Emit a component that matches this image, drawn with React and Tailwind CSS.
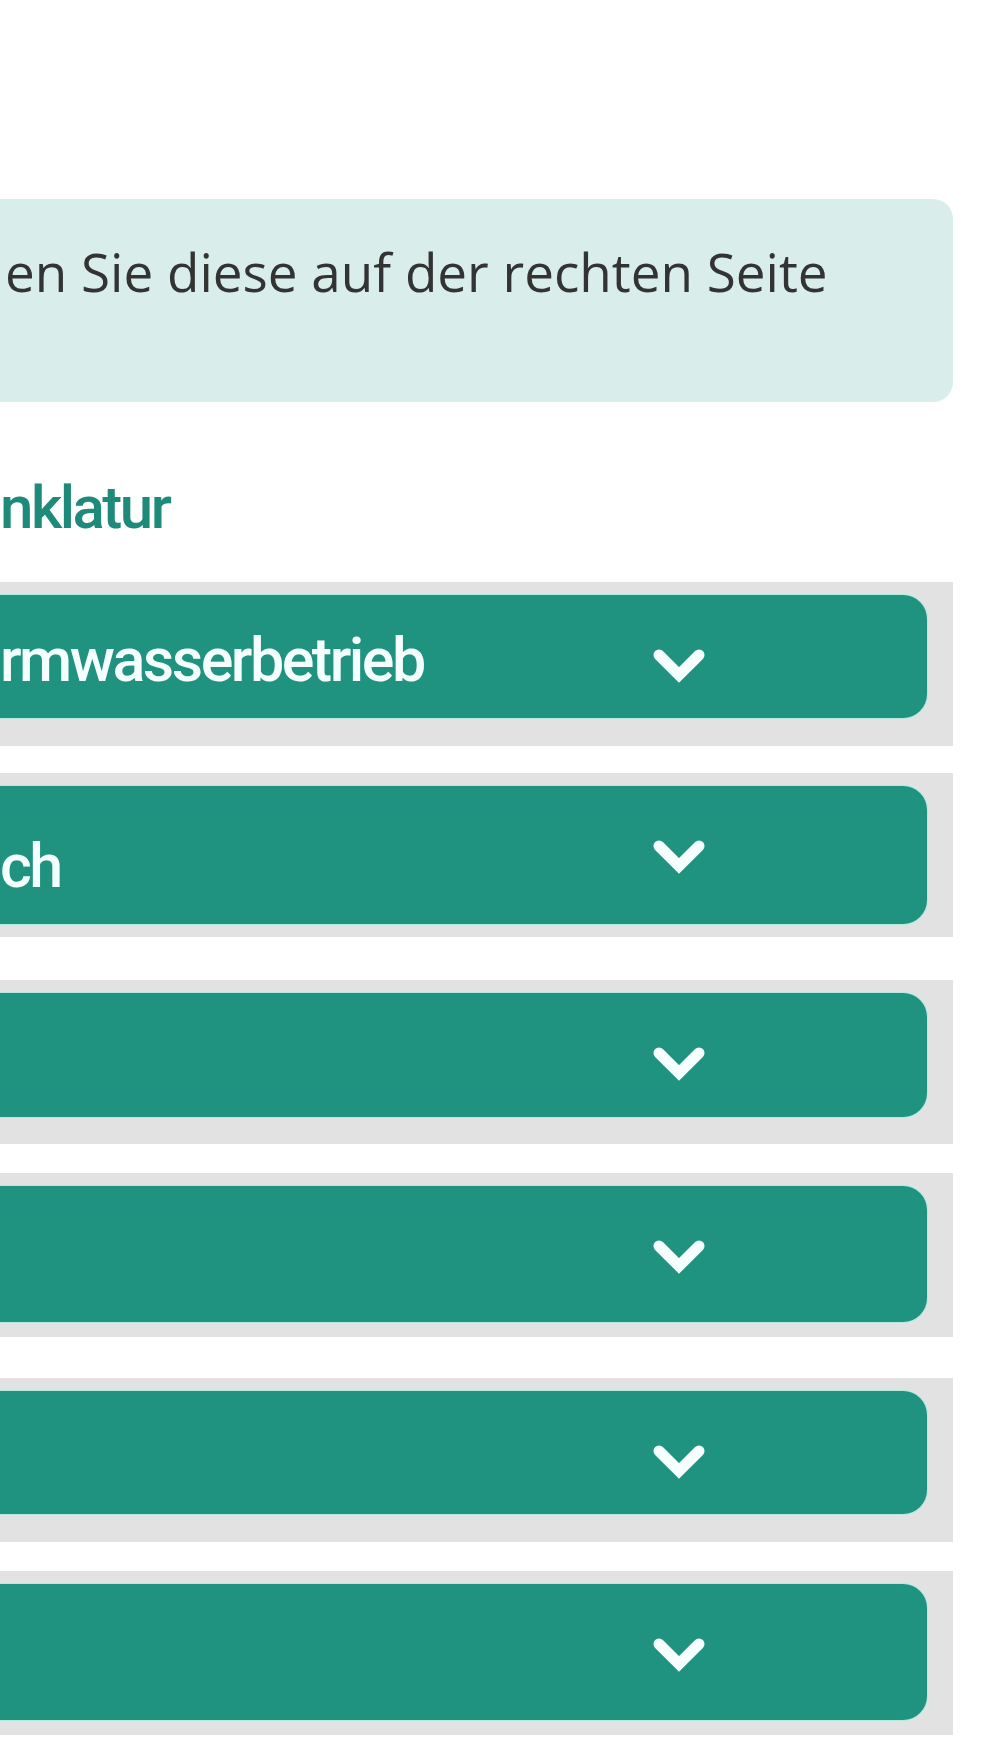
import { useState } from "react"

const items = [
  { label: "rmwasserbetrieb", h: "h-[123px]", mt: "mt-0" },
  { label: "ch", h: "h-[138px]", mt: "mt-[27px]" },
  { label: "", h: "h-[124px]", mt: "mt-[43px]" },
  { label: "", h: "h-[136px]", mt: "mt-[29px]" },
  { label: "", h: "h-[123px]", mt: "mt-[41px]" },
  { label: "", h: "h-[136px]", mt: "mt-[29px]" },
]

function Chevron() {
  return (
    <svg
      viewBox="0 0 52 37"
      className="w-[52px] h-[37px] shrink-0 mt-[54px]"
      fill="none"
      stroke="#f6fffd"
      strokeWidth="11"
      strokeLinecap="round"
      strokeLinejoin="miter"
    >
      <polyline points="6,6 26,26 46,6" />
    </svg>
  )
}

function AccordionItem({ label, h, mt }) {
  const [open, setOpen] = useState(false)

  return (
    <div className={`-ml-[30px] w-[983px] h-[164px] pt-[13px] bg-[#e2e2e2] ${mt}`}>
      <button
        onClick={() => setOpen(!open)}
        className={`w-[957px] ${h} flex rounded-[24px] bg-[#1f9380] shadow-[0_0_0_1px_#b4e9df] text-left`}
      >
        <div className="w-[683px] shrink-0 self-end pl-[30px] pb-[27px]">
          <span className="block text-[61px] leading-[62px] font-medium tracking-[-2.5px] text-[#f4fffd] font-['Roboto',sans-serif] whitespace-nowrap">
            {label}
          </span>
        </div>
        <Chevron />
      </button>
    </div>
  )
}

export default function App() {
  return (
    <div className="w-[990px] h-[1760px] overflow-hidden bg-white">
      <div className="flex flex-col">
        {/* Hinweisbox */}
        <div className="mt-[199px] -ml-[30px] w-[983px] h-[203px] rounded-[20px] bg-[#d9eeeb] pl-[35px] pt-[37px]">
          <p className="text-[53px] leading-[72px] text-[#333333] font-['Open_Sans',sans-serif] whitespace-nowrap">
            en Sie diese auf der rechten Seite
          </p>
        </div>

        <h2 className="mt-[76px] text-[60px] leading-[60px] font-medium tracking-[-2.5px] text-[#1e8a79] font-['Roboto',sans-serif] whitespace-nowrap">
          nklatur
        </h2>

        <div className="mt-[44px] flex flex-col">
          {items.map((item, i) => (
            <AccordionItem key={i} {...item} />
          ))}
        </div>
      </div>
    </div>
  )
}
